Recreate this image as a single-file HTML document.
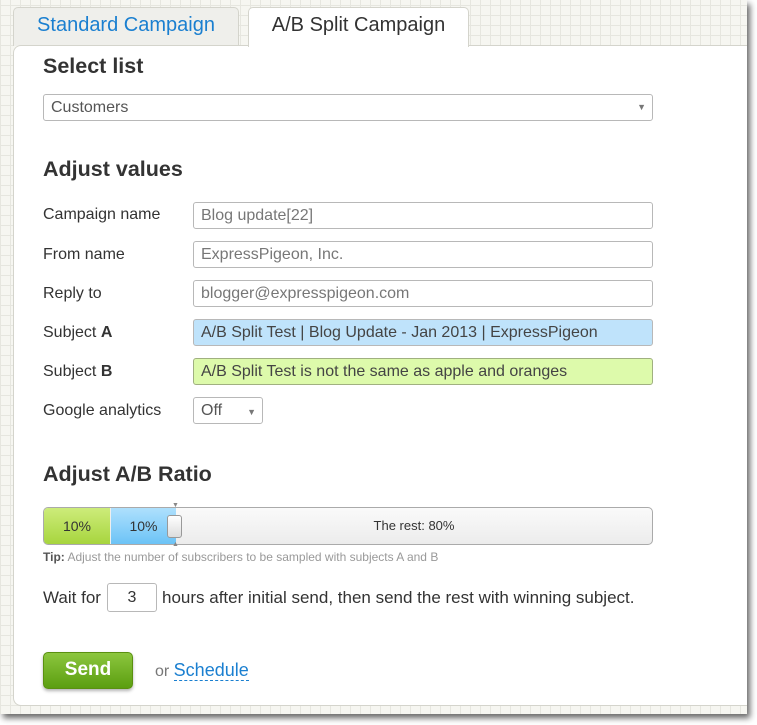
<!DOCTYPE html>
<html><head><meta charset="utf-8"><style>
*{box-sizing:border-box;margin:0;padding:0}
body{width:757px;height:725px;background:#fff;font-family:"Liberation Sans",sans-serif;position:relative;overflow:hidden}
#win{position:absolute;left:0;top:0;width:747px;height:714px;background-color:#f6f6f1;
background-image:linear-gradient(#e6e6df 1px,transparent 1px),linear-gradient(90deg,#e6e6df 1px,transparent 1px);
background-size:10px 10px;background-position:0 5px;box-shadow:3px 4px 6px rgba(0,0,0,.6)}
.tab{position:absolute;top:7px;height:39px;border:1px solid #d4d4cc;border-bottom:none;border-radius:5px 5px 0 0;font-size:20px;text-align:center;line-height:34px}
#t1{left:13px;width:226px;background:#efefeb;color:#1a7fd0}
#t2{left:248px;width:221px;background:#fff;color:#333;height:40px;z-index:2}
#panel{position:absolute;left:13px;top:45px;width:734px;height:661px;background:#fff;border:1px solid #d4d4cc;border-right:none;border-radius:8px 0 0 8px}
.abs{position:absolute}
h2{position:absolute;left:43px;font-size:21.5px;font-weight:bold;color:#333}
.lbl{position:absolute;left:43px;font-size:16px;color:#333}
.inp{position:absolute;left:193px;width:460px;height:27px;border:1px solid #b8b8b8;border-radius:3px;font-size:16px;color:#777;padding-left:7px;line-height:25px}
.arr{position:absolute;right:6px;top:0;font-size:9px;color:#777}
</style></head><body>
<div id="win">
<div class="tab" id="t1">Standard Campaign</div>
<div class="tab" id="t2">A/B Split Campaign</div>
<div id="panel"></div>
<h2 style="top:54px">Select list</h2>
<div class="inp" style="top:94px;height:27px;width:610px;left:43px;color:#555">Customers<span class="arr">▼</span></div>
<h2 style="top:157px">Adjust values</h2>
<div class="lbl" style="top:206px">Campaign name</div>
<div class="inp" style="top:202px">Blog update[22]</div>
<div class="lbl" style="top:246px">From name</div>
<div class="inp" style="top:241px">ExpressPigeon, Inc.</div>
<div class="lbl" style="top:285px">Reply to</div>
<div class="inp" style="top:280px">blogger@expresspigeon.com</div>
<div class="lbl" style="top:324px">Subject <b>A</b></div>
<div class="inp" style="top:319px;background:#bfe3fb;color:#444">A/B Split Test | Blog Update - Jan 2013 | ExpressPigeon</div>
<div class="lbl" style="top:363px">Subject <b>B</b></div>
<div class="inp" style="top:358px;background:#ddfaab;color:#444;border-color:#a0b080">A/B Split Test is not the same as apple and oranges</div>
<div class="lbl" style="top:402px">Google analytics</div>
<div class="inp" style="top:397px;width:70px;color:#555">Off<span class="arr" style="right:6px;top:2px">▼</span></div>
<h2 style="top:462px">Adjust A/B Ratio</h2>
<div class="abs" style="left:43px;top:507px;width:610px;height:38px;border:1px solid #aaa;border-radius:5px;overflow:hidden;background:linear-gradient(#fafafa,#ececec)">
 <div class="abs" style="left:0;top:0;width:66px;height:36px;background:linear-gradient(#cdec7a,#a7d53e);font-size:14px;color:#333;text-align:center;line-height:36px">10%</div>
 <div class="abs" style="left:66px;top:0;width:66px;height:36px;background:linear-gradient(#aee0fd,#6cc3f6);font-size:14px;color:#333;text-align:center;line-height:36px;border-left:1px solid #eee">10%</div>
 <div class="abs" style="left:132px;top:0;width:476px;height:36px;font-size:13px;color:#333;text-align:center;line-height:36px">The rest: 80%</div>
</div>
<div class="abs" style="left:167px;top:515px;width:15px;height:23px;border:1px solid #999;border-radius:3px;background:linear-gradient(#fff,#ddd)"></div>
<div class="abs" style="left:172px;top:502px;font-size:7px;color:#888">▼</div>
<div class="abs" style="left:172px;top:541px;font-size:7px;color:#888">▲</div>
<div class="abs" style="left:43px;top:550px;font-size:12px;color:#999"><b style="color:#555">Tip:</b> Adjust the number of subscribers to be sampled with subjects A and B</div>
<div class="lbl" style="top:588px;font-size:17px">Wait for</div>
<div class="inp" style="left:107px;top:583px;width:50px;height:29px;text-align:center;color:#333;padding:0;line-height:27px">3</div>
<div class="lbl" style="left:162px;top:588px;font-size:17px">hours after initial send, then send the rest with winning subject.</div>
<div class="abs" style="left:43px;top:652px;width:90px;height:37px;border-radius:5px;background:linear-gradient(#8cc63e,#5b9e10);border:1px solid #5a9010;color:#fff;font-weight:bold;font-size:19px;text-align:center;line-height:34px;box-shadow:0 2px 3px rgba(0,0,0,.3)">Send</div>
<div class="abs" style="left:155px;top:660px;font-size:16px;color:#777">or <span style="color:#1a7fd0;border-bottom:1px dashed #1a7fd0;font-size:18px">Schedule</span></div>
</div>
</body></html>
